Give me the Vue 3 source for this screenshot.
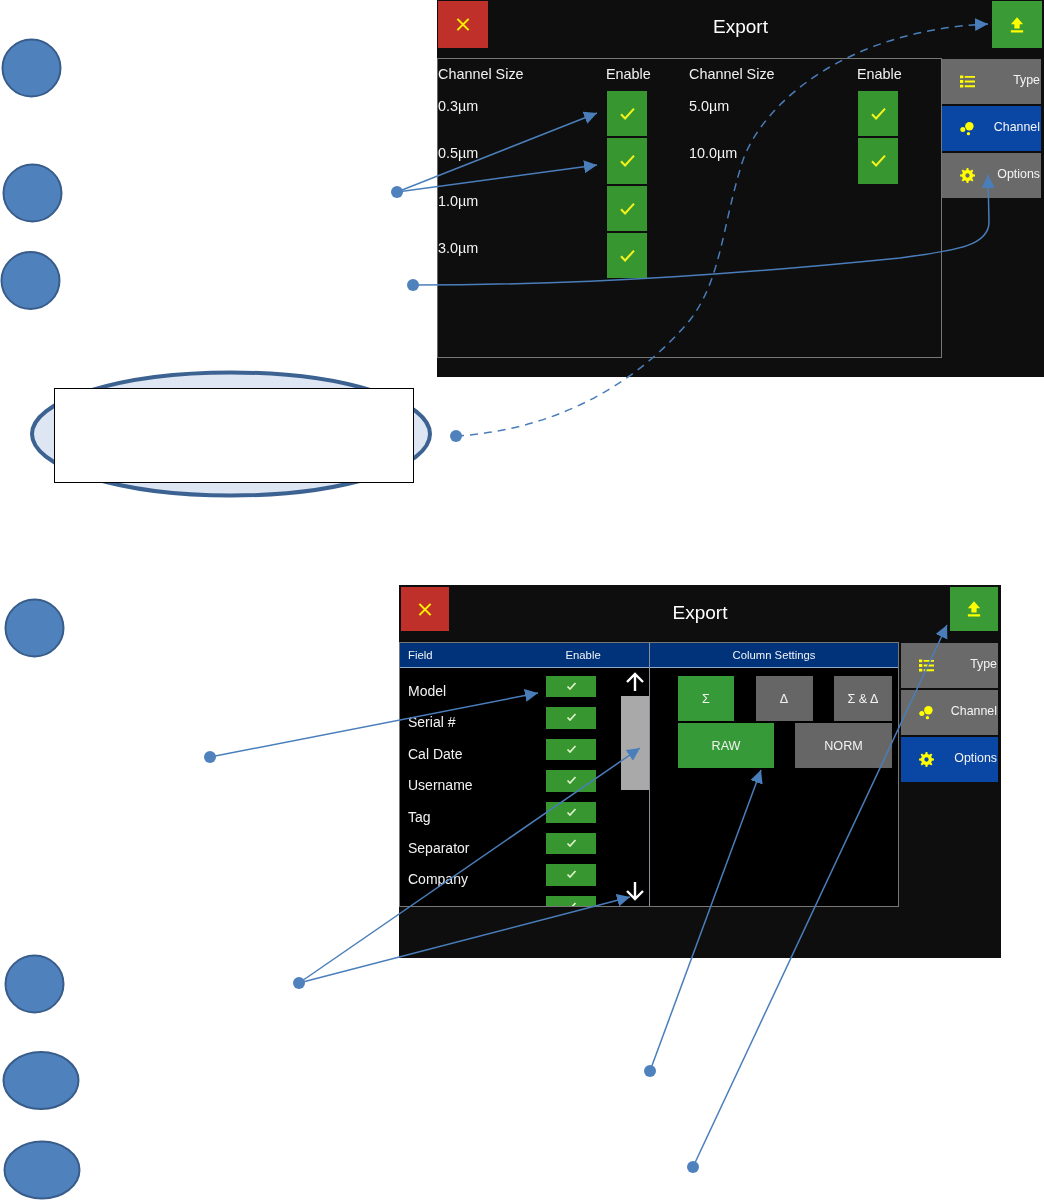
<script setup>
const leftSizes = ['0.3µm', '0.5µm', '1.0µm', '3.0µm']
const rightSizes = ['5.0µm', '10.0µm']
const channelRows = [0, 1, 2, 3].map((i) => ({ a: leftSizes[i], b: rightSizes[i] }))
const fields = ['Model', 'Serial #', 'Cal Date', 'Username', 'Tag', 'Separator', 'Company', '']
const blobs = [
  { cx: 31.5, cy: 68, rx: 29, ry: 28.5 },
  { cx: 32.5, cy: 193, rx: 29, ry: 28.5 },
  { cx: 30.5, cy: 280.5, rx: 29, ry: 28.5 },
  { cx: 34.5, cy: 628, rx: 29, ry: 28.5 },
  { cx: 34.5, cy: 984, rx: 29, ry: 28.5 },
  { cx: 41, cy: 1080.5, rx: 37.5, ry: 28.5 },
  { cx: 42, cy: 1170, rx: 37.5, ry: 28.5 }
]
const dots = [
  [397, 192], [413, 285], [456, 436], [210, 757], [299, 983], [650, 1071], [693, 1167]
]
const arrows = [
  'M397 192 L597 113',
  'M397 192 L597 165',
  'M413 285 C600 285 760 272 900 258 C960 250 989 245 989 222 L988 175',
  'M210 757 L538 693',
  'M299 983 L640 748',
  'M299 983 L630 897',
  'M650 1071 L761 770',
  'M693 1167 L947 625'
]
const dashedArrow = 'M456 436 C560 430 640 380 690 320 C722 278 722 225 743 160 C765 100 850 30 988 24'

// Eight-toothed gear outline with a round hole in the middle.
function gearPath() {
  const pts = []
  const teeth = 8
  for (let i = 0; i < teeth; i++) {
    const a = (i / teeth) * Math.PI * 2
    const step = (Math.PI * 2) / teeth
    const spots = [
      [a - step * 0.27, 5.9],
      [a - step * 0.15, 8],
      [a + step * 0.15, 8],
      [a + step * 0.27, 5.9]
    ]
    for (const [t, r] of spots) {
      pts.push(`${(8 + r * Math.cos(t)).toFixed(2)} ${(8 + r * Math.sin(t)).toFixed(2)}`)
    }
  }
  return `M${pts.join(' L')} Z M10.3 8 A2.3 2.3 0 1 0 5.7 8 A2.3 2.3 0 1 0 10.3 8 Z`
}
const gear = gearPath()
</script>

<template>
  <div class="page">
    <svg class="defs" width="0" height="0">
      <defs>
        <symbol id="i-x" viewBox="0 0 16 16"><path d="M2 2 L14 14 M14 2 L2 14" fill="none" stroke="#ffee00" stroke-width="2.2" /></symbol>
        <symbol id="i-check" viewBox="0 0 20 16"><path d="M2 9 L7 14 L18 2" fill="none" stroke="#f2f21e" stroke-width="2.6" /></symbol>
        <symbol id="i-check-pale" viewBox="0 0 20 16"><path d="M2 9 L7 14 L18 2" fill="none" stroke="#dff3c8" stroke-width="3.4" /></symbol>
        <symbol id="i-up" viewBox="0 0 16 18"><path d="M8 0 L15 8 L11 8 L11 13 L5 13 L5 8 L1 8 Z M1 15 H15 V17.5 H1 Z" fill="#ffff00" /></symbol>
        <symbol id="i-list" viewBox="0 0 16 14">
          <path d="M5 2 H16 M5 7 H16 M5 12 H16" stroke="#ffff00" stroke-width="2" fill="none" />
          <path d="M0 0.5 H3.5 V3.5 H0 Z M0 5.5 H3.5 V8.5 H0 Z M0 10.5 H3.5 V13.5 H0 Z" fill="#ffff00" />
        </symbol>
        <symbol id="i-dots" viewBox="0 0 16 16">
          <circle cx="10" cy="5.5" r="4.5" fill="#ffff00" />
          <circle cx="3" cy="9" r="2.7" fill="#ffff00" />
          <circle cx="9" cy="13.5" r="1.8" fill="#ffff00" />
        </symbol>
        <symbol id="i-gear" viewBox="0 0 16 16"><path :d="gear" fill="#ffff00" fill-rule="evenodd" /></symbol>
        <symbol id="i-arrow-up" viewBox="0 0 20 20"><path d="M10 19 V2 M2 10 L10 2 L18 10" fill="none" stroke="#fff" stroke-width="2.4" /></symbol>
        <symbol id="i-arrow-down" viewBox="0 0 20 20"><path d="M10 1 V18 M2 10 L10 18 L18 10" fill="none" stroke="#fff" stroke-width="2.4" /></symbol>
      </defs>
    </svg>

    <section class="screen screen-a">
      <header class="bar">
        <button class="tile red"><svg class="ico-x"><use href="#i-x" /></svg></button>
        <h1 class="title">Export</h1>
        <button class="tile green"><svg class="ico-up"><use href="#i-up" /></svg></button>
      </header>
      <div class="body">
        <div class="panel">
          <div class="channel-grid">
            <span class="head">Channel Size</span>
            <span class="head en">Enable</span>
            <span class="head">Channel Size</span>
            <span class="head en">Enable</span>
            <template v-for="row in channelRows" :key="row.a">
              <span class="size">{{ row.a }}</span>
              <span class="check"><svg class="ico-check"><use href="#i-check" /></svg></span>
              <span class="size">{{ row.b }}</span>
              <span v-if="row.b" class="check"><svg class="ico-check"><use href="#i-check" /></svg></span>
              <span v-else></span>
            </template>
          </div>
        </div>
        <nav class="side">
          <div class="nav"><svg class="ico-nav"><use href="#i-list" /></svg><span>Type</span></div>
          <div class="nav active"><svg class="ico-nav"><use href="#i-dots" /></svg><span>Channel</span></div>
          <div class="nav"><svg class="ico-nav"><use href="#i-gear" /></svg><span>Options</span></div>
        </nav>
      </div>
    </section>

    <section class="screen screen-b">
      <header class="bar">
        <button class="tile red"><svg class="ico-x"><use href="#i-x" /></svg></button>
        <h1 class="title">Export</h1>
        <button class="tile green"><svg class="ico-up"><use href="#i-up" /></svg></button>
      </header>
      <div class="body">
        <div class="table">
          <div class="col left">
            <div class="thead"><span>Field</span><span>Enable</span></div>
            <div class="left-body">
              <div class="rows">
                <div v-for="f in fields" :key="f" class="row">
                  <span class="field">{{ f }}</span>
                  <span class="toggle"><svg class="ico-mini"><use href="#i-check-pale" /></svg></span>
                </div>
              </div>
              <div class="track">
                <svg class="ico-scroll"><use href="#i-arrow-up" /></svg>
                <div class="thumb"></div>
                <svg class="ico-scroll down"><use href="#i-arrow-down" /></svg>
              </div>
            </div>
          </div>
          <div class="col right">
            <div class="thead center"><span>Column Settings</span></div>
            <div class="settings">
              <div class="set-row">
                <span class="opt on w56">Σ</span>
                <span class="opt w57">Δ</span>
                <span class="opt w58">Σ &amp; Δ</span>
              </div>
              <div class="set-row">
                <span class="opt on w96">RAW</span>
                <span class="opt w97">NORM</span>
              </div>
            </div>
          </div>
        </div>
        <nav class="side">
          <div class="nav"><svg class="ico-nav"><use href="#i-list" /></svg><span>Type</span></div>
          <div class="nav"><svg class="ico-nav"><use href="#i-dots" /></svg><span>Channel</span></div>
          <div class="nav active"><svg class="ico-nav"><use href="#i-gear" /></svg><span>Options</span></div>
        </nav>
      </div>
    </section>

    <svg class="overlay" width="1044" height="1200" viewBox="0 0 1044 1200">
      <defs>
        <marker id="tip" markerUnits="userSpaceOnUse" markerWidth="14" markerHeight="14" refX="13" refY="6.5" orient="auto">
          <path d="M0 0 L13 6.5 L0 13 Z" fill="#4a7ebb" />
        </marker>
      </defs>
      <ellipse cx="231" cy="434" rx="199" ry="61.5" fill="#dfe6f3" stroke="#3c6291" stroke-width="4" />
      <rect x="54.5" y="388.5" width="359" height="94" fill="#fff" stroke="#000" stroke-width="1" />
      <ellipse v-for="(b, i) in blobs" :key="i" :cx="b.cx" :cy="b.cy" :rx="b.rx" :ry="b.ry" fill="#4f81bd" stroke="#385d8a" stroke-width="2" />
      <path v-for="(d, i) in arrows" :key="i" :d="d" fill="none" stroke="#4a7ebb" stroke-width="1.5" marker-end="url(#tip)" />
      <path :d="dashedArrow" fill="none" stroke="#4a7ebb" stroke-width="1.5" stroke-dasharray="8 6" marker-end="url(#tip)" />
      <circle v-for="(d, i) in dots" :key="i" :cx="d[0]" :cy="d[1]" r="6" fill="#4f81bd" />
    </svg>
  </div>
</template>

<style scoped>
.page {
  position: relative;
  width: 1044px;
  height: 1200px;
  background: #fff;
  overflow: hidden;
  font-family: "Liberation Sans", Arial, sans-serif;
}
.defs { position: absolute; }
.overlay { position: absolute; left: 0; top: 0; pointer-events: none; }

.screen {
  position: absolute;
  box-sizing: border-box;
  background: #0e0e0e;
  color: #fff;
  filter: blur(0.35px);
}
.screen-a { left: 437px; top: 0; width: 607px; height: 377px; padding-top: 1px; }
.screen-b { left: 399px; top: 585px; width: 602px; height: 373px; padding-top: 2px; }

.bar {
  position: relative;
  display: flex;
  justify-content: space-between;
  align-items: flex-start;
  padding: 0 2px 0 1px;
}
.screen-a .bar { height: 57px; }
.screen-b .bar { height: 55px; padding-left: 2px; padding-right: 3px; }
.title {
  position: absolute;
  left: 0;
  right: 0;
  top: 15px;
  margin: 0;
  text-align: center;
  font-size: 19px;
  line-height: 22px;
  font-weight: 400;
}
.tile {
  display: flex;
  align-items: center;
  justify-content: center;
  border: 0;
  padding: 0;
  width: 50px;
  height: 47px;
}
.screen-b .tile { width: 48px; height: 44px; }
.red { background: #c0302b; }
.green { background: #3a9a35; }
.ico-x { width: 16px; height: 15px; }
.ico-up { width: 14px; height: 16px; }

.body { display: flex; align-items: flex-start; }
.panel {
  box-sizing: border-box;
  width: 505px;
  height: 300px;
  border: 1px solid #777;
  border-left-color: #666;
}
.channel-grid {
  display: grid;
  grid-template-columns: 167px 84px 167px 85px;
  grid-template-rows: 30px repeat(4, 45.3px);
  row-gap: 2px;
}
.channel-grid .head {
  font-size: 14.4px;
  line-height: 30px;
  color: #f2f2f2;
}
.channel-grid .en { margin-left: 1px; }
.size {
  font-size: 14.4px;
  line-height: 30px;
  color: #f2f2f2;
}
.check {
  display: flex;
  align-items: center;
  justify-content: center;
  width: 40px;
  margin-left: 2px;
  background: #37962f;
}
.ico-check { width: 17px; height: 13px; }

.side { display: flex; flex-direction: column; gap: 2px; }
.screen-a .side { width: 99px; margin-top: 1px; }
.screen-b .side { width: 97px; margin-left: 2px; margin-top: 1px; }
.nav {
  display: flex;
  align-items: center;
  justify-content: space-between;
  box-sizing: border-box;
  height: 45px;
  padding: 0 1px 4px 18px;
  background: #6a6a6a;
  font-size: 12.4px;
  color: #f4f4f4;
}
.nav.active { background: #0a46a4; }
.ico-nav { width: 15px; height: 15px; margin-top: 4px; }

.table {
  box-sizing: border-box;
  display: grid;
  grid-template-columns: 250px 248px;
  width: 500px;
  height: 265px;
  background: #000;
  border: 1px solid #777;
  overflow: hidden;
}
.col { min-width: 0; }
.col.left { border-right: 1px solid #8a8f99; }
.thead {
  box-sizing: border-box;
  display: flex;
  align-items: center;
  height: 25px;
  background: #00337a;
  border-bottom: 1px solid #8fa8cc;
  font-size: 11.3px;
  color: #f0f3f8;
  padding: 0 8px 1px;
  gap: 133px;
}
.thead.center { justify-content: center; gap: 0; }
.left-body { display: flex; height: 238px; overflow: hidden; }
.rows { padding: 8px 0 0 8px; width: 196px; flex: none; box-sizing: border-box; }
.row { display: flex; height: 21.4px; margin-bottom: 10px; }
.field {
  width: 138px;
  flex: none;
  font-size: 14px;
  line-height: 20px;
  padding-top: 5px;
  color: #f2f2f2;
  white-space: nowrap;
}
.toggle {
  display: flex;
  align-items: flex-start;
  justify-content: center;
  width: 50px;
  flex: none;
  padding-top: 6px;
  box-sizing: border-box;
  background: #37962f;
}
.ico-mini { width: 11px; height: 8px; }
.track {
  display: flex;
  flex-direction: column;
  align-items: center;
  width: 28px;
  margin-left: 25px;
  flex: none;
}
.ico-scroll { width: 20px; height: 20px; margin-top: 4px; flex: none; }
.ico-scroll.down { margin-top: 91px; }
.thumb { width: 28px; height: 94px; background: #a9a9a9; margin-top: 4px; flex: none; }

.settings { display: flex; flex-direction: column; gap: 2px; padding: 8px 0 0 28px; width: 214px; }
.set-row { display: flex; justify-content: space-between; height: 45px; }
.opt {
  display: flex;
  align-items: center;
  justify-content: center;
  background: #666;
  font-size: 12.6px;
  color: #f2f2f2;
}
.opt.on { background: #379a39; }
.w56 { width: 56px; }
.w57 { width: 57px; }
.w58 { width: 58px; }
.w96 { width: 96px; }
.w97 { width: 97px; }
</style>
